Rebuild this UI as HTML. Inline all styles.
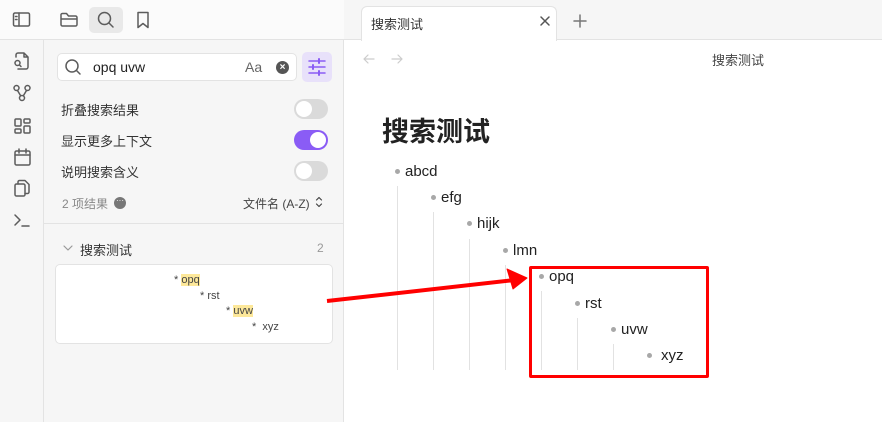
<!DOCTYPE html>
<html><head><meta charset="utf-8"><style>
*{box-sizing:border-box;margin:0;padding:0}
body{width:882px;height:422px;overflow:hidden;background:#fff;font-family:"Liberation Sans","Noto Sans CJK SC",sans-serif;position:relative;color:#222}
.abs{position:absolute}
svg{position:absolute;fill:none;stroke:#5c5c5c;stroke-width:1.5;stroke-linecap:round;stroke-linejoin:round}
.t{font-size:13px;color:#333}
.tog{position:absolute;left:294px;width:34px;height:20px;border-radius:10px;background:#dadada}
.tog i{position:absolute;top:2px;left:2px;width:16px;height:16px;border-radius:50%;background:#fff}
.tog.on{background:#8a5cf5}.tog.on i{left:16px}
.li{position:absolute;font-size:15px;color:#222}
.li b{position:absolute;left:-10px;top:6px;width:5px;height:5px;border-radius:50%;background:#a8a8a8}
.vl{position:absolute;width:1px;background:#e2e2e2}
</style></head><body>
<div class="abs" style="left:0;top:0;width:344px;height:40px;background:#fbfbfb;border-bottom:1px solid #e3e3e3"></div>
<div class="abs" style="left:0;top:40px;width:44px;height:382px;background:#f6f6f6;border-right:1px solid #e3e3e3"></div>
<div class="abs" style="left:44px;top:40px;width:300px;height:382px;background:#f6f6f6;border-right:1px solid #e3e3e3"></div>
<svg style="left:12px;top:11px" width="20" height="18"><rect x="1.5" y="2" width="16" height="13" rx="1.5"/><line x1="7" y1="2" x2="7" y2="15"/><line x1="3.5" y1="5.5" x2="5" y2="5.5"/><line x1="3.5" y1="8.5" x2="5" y2="8.5"/></svg>
<svg style="left:59px;top:10px" width="20" height="20"><path d="M2 5.5v9a1.5 1.5 0 0 0 1.5 1.5h13a1.5 1.5 0 0 0 1.5-1.5v-7a1.5 1.5 0 0 0-1.5-1.5h-7l-2-2.5h-4A1.5 1.5 0 0 0 2 5.5zM2 9h16"/></svg>
<div class="abs" style="left:89px;top:7px;width:34px;height:26px;border-radius:5px;background:#e9e9e9"></div>
<svg style="left:96px;top:10px" width="20" height="20"><circle cx="8.5" cy="8.5" r="6"/><line x1="13" y1="13" x2="17" y2="17"/></svg>
<svg style="left:134px;top:10px" width="20" height="20"><path d="M4 2.5h10v15l-5-4-5 4z"/></svg>
<svg style="left:12px;top:51px" width="20" height="20"><path d="M12 2H6a2 2 0 0 0-2 2v2M12 2l4 4v10a2 2 0 0 1-2 2H6M12 2v4h4"/><circle cx="5.5" cy="12" r="2.5"/><line x1="7.5" y1="14" x2="9" y2="15.5"/></svg>
<svg style="left:12px;top:83px" width="20" height="20"><circle cx="4.5" cy="5" r="2.5"/><circle cx="15.5" cy="5" r="2.5"/><circle cx="10" cy="15" r="2.5"/><path d="M5.5 7.5l3 5M14.5 7.5l-3 5"/></svg>
<svg style="left:12px;top:116px" width="20" height="20"><rect x="3" y="3" width="6" height="7" rx="1"/><rect x="12" y="3" width="6" height="4" rx="1"/><rect x="3" y="13" width="6" height="4" rx="1"/><rect x="12" y="10" width="6" height="7" rx="1"/></svg>
<svg style="left:12px;top:147px" width="20" height="20"><rect x="3" y="4" width="15" height="14" rx="1.5"/><path d="M3 8h15M7 2v4M14 2v4"/></svg>
<svg style="left:12px;top:178px" width="20" height="20"><rect x="3" y="6" width="10" height="12" rx="1.5"/><path d="M6 6V4a1.5 1.5 0 0 1 1.5-1.5H13l4 4V14a1.5 1.5 0 0 1-1.5 1.5H13"/></svg>
<svg style="left:12px;top:210px" width="20" height="20"><path d="M3 5l5 5-5 5M10 16h7"/></svg>
<div class="abs" style="left:57px;top:53px;width:240px;height:28px;background:#fff;border:1px solid #e3e3e3;border-radius:5px"></div>
<svg style="left:64px;top:58px" width="20" height="20"><circle cx="8" cy="8" r="6"/><line x1="12.5" y1="12.5" x2="16" y2="16"/></svg>
<div class="abs" style="left:93px;top:59px;font-size:14px;color:#222">opq uvw</div>
<div class="abs" style="left:245px;top:59px;font-size:14px;color:#666">Aa</div>
<div class="abs" style="left:276px;top:61px;width:13px;height:13px;border-radius:50%;background:#555;color:#fff;font-size:10px;line-height:13px;text-align:center;font-weight:bold">×</div>
<div class="abs" style="left:302px;top:52px;width:30px;height:30px;border-radius:5px;background:#e8e1fa"></div>
<svg style="left:307px;top:57px;stroke:#8a5cf5" width="20" height="20"><path d="M2 4h16M2 10h16M2 16h16"/><path d="M12 2v4M6 8v4M12 14v4" stroke-width="2"/></svg>
<div class="abs t" style="left:61px;top:100px">折叠搜索结果</div>
<div class="tog" style="top:99px"><i></i></div>
<div class="abs t" style="left:61px;top:131px">显示更多上下文</div>
<div class="tog on" style="top:130px"><i></i></div>
<div class="abs t" style="left:61px;top:162px">说明搜索含义</div>
<div class="tog" style="top:161px"><i></i></div>
<div class="abs" style="left:62px;top:195px;font-size:12px;color:#888">2 项结果</div>
<div class="abs" style="left:114px;top:197px;width:12px;height:12px;border-radius:50%;background:#777;color:#fff;font-size:8px;line-height:8px;text-align:center">···</div>
<div class="abs" style="left:243px;top:195px;font-size:12px;color:#444">文件名 (A-Z)</div>
<svg style="left:315px;top:196px;stroke:#444;stroke-width:1.2" width="8" height="12"><path d="M1.5 4l2.5-2.5L6.5 4M1.5 8l2.5 2.5L6.5 8"/></svg>
<div class="abs" style="left:44px;top:223px;width:299px;height:1px;background:#e3e3e3"></div>
<svg style="left:62px;top:243px;stroke:#999;stroke-width:1.2" width="12" height="10"><path d="M2 3l4 4 4-4"/></svg>
<div class="abs" style="left:80px;top:240px;font-size:13px;color:#333">搜索测试</div>
<div class="abs" style="left:317px;top:241px;font-size:12px;color:#999">2</div>
<div class="abs" style="left:55px;top:264px;width:278px;height:80px;background:#fff;border:1px solid #e3e3e3;border-radius:5px;font-size:11px;color:#444">
<div class="abs" style="left:118px;top:9px">* <span style="background:#fde89a">opq</span></div>
<div class="abs" style="left:144px;top:25px">* rst</div>
<div class="abs" style="left:170px;top:40px">* <span style="background:#fde89a">uvw</span></div>
<div class="abs" style="left:196px;top:56px">*&nbsp; xyz</div>
</div>
<div class="abs" style="left:344px;top:0;width:538px;height:40px;background:#f6f6f6;border-bottom:1px solid #e3e3e3"></div>
<div class="abs" style="left:361px;top:6px;width:196px;height:35px;background:#fff;border:1px solid #e3e3e3;border-bottom:none;border-radius:6px 6px 0 0"></div>
<div class="abs" style="left:371px;top:14px;font-size:13px;color:#333">搜索测试</div>
<svg style="left:538px;top:14px;stroke:#555" width="14" height="14"><path d="M3 3l8 8M11 3l-8 8"/></svg>
<svg style="left:572px;top:13px;stroke:#777" width="16" height="16"><path d="M8 2v12M2 8h12"/></svg>
<svg style="left:362px;top:52px;stroke:#ccc;stroke-width:1.2" width="14" height="14"><path d="M12 7H2M6 3L2 7l4 4"/></svg>
<svg style="left:390px;top:52px;stroke:#ccc;stroke-width:1.2" width="14" height="14"><path d="M2 7h10M8 3l4 4-4 4"/></svg>
<div class="abs" style="left:712px;top:50px;font-size:13px;color:#444">搜索测试</div>
<div class="abs" style="left:382px;top:110px;font-size:27px;font-weight:bold;color:#222">搜索测试</div>
<div class="vl" style="left:397px;top:186px;height:184px"></div>
<div class="vl" style="left:433px;top:212px;height:158px"></div>
<div class="vl" style="left:469px;top:239px;height:131px"></div>
<div class="vl" style="left:505px;top:265px;height:105px"></div>
<div class="vl" style="left:541px;top:291px;height:79px"></div>
<div class="vl" style="left:577px;top:318px;height:52px"></div>
<div class="vl" style="left:613px;top:344px;height:26px"></div>
<div class="li" style="left:405px;top:163px"><b></b>abcd</div>
<div class="li" style="left:441px;top:189px"><b></b>efg</div>
<div class="li" style="left:477px;top:215px"><b></b>hijk</div>
<div class="li" style="left:513px;top:242px"><b></b>lmn</div>
<div class="li" style="left:549px;top:268px"><b></b>opq</div>
<div class="li" style="left:585px;top:295px"><b></b>rst</div>
<div class="li" style="left:621px;top:321px"><b></b>uvw</div>
<div class="li" style="left:661px;top:347px"><b style="left:-14px"></b>xyz</div>
<div class="abs" style="left:529px;top:266px;width:180px;height:112px;border:3px solid #f00;border-radius:2px"></div>
<svg style="left:320px;top:265px;stroke:#f00;stroke-width:4;stroke-linecap:butt" width="215" height="45"><path d="M7 36L195 15"/><path d="M207 13L187 4L193 24Z" fill="#f00" stroke-width="1"/></svg>
</body></html>
